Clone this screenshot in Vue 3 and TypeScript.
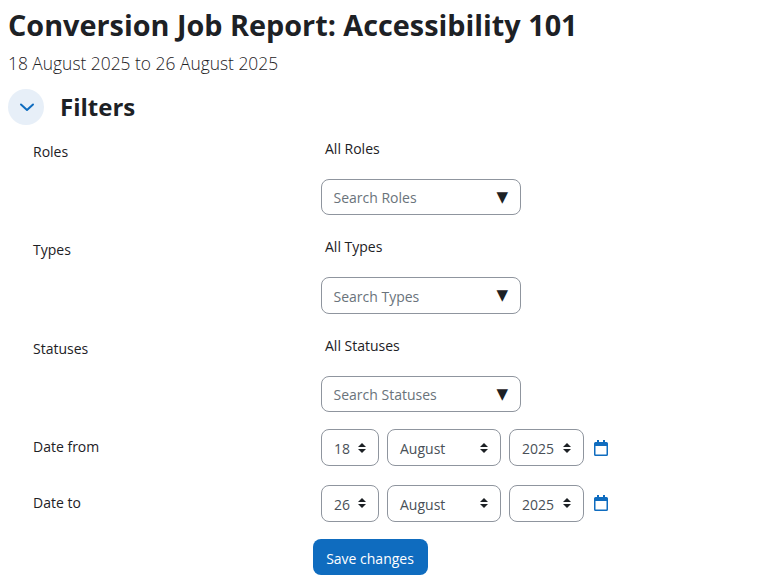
<script setup lang="ts">
interface AutoRow { label: string; value: string; placeholder: string }
interface DateRow { label: string; day: string }
const autos: AutoRow[] = [
  { label: 'Roles', value: 'All Roles', placeholder: 'Search Roles' },
  { label: 'Types', value: 'All Types', placeholder: 'Search Types' },
  { label: 'Statuses', value: 'All Statuses', placeholder: 'Search Statuses' },
]
const dates: DateRow[] = [
  { label: 'Date from', day: '18' },
  { label: 'Date to', day: '26' },
]
</script>

<template>
  <main class="page">
    <h1 class="title">Conversion Job Report: Accessibility 101</h1>
    <p class="range">18 August 2025 to 26 August 2025</p>
    <div class="filters-head">
      <span class="toggle">
        <svg width="16" height="16" viewBox="0 0 16 16" fill="none">
          <path d="M2 5.500 8 11l6-5.500" stroke="#0f6cbf" stroke-width="2" stroke-linecap="round" stroke-linejoin="round" />
        </svg>
      </span>
      <h2 class="filters-title">Filters</h2>
    </div>
    <form class="form" @submit.prevent>
      <div v-for="a in autos" :key="a.label" class="row auto-row">
        <span class="label">{{ a.label }}</span>
        <div class="auto">
          <span class="value">{{ a.value }}</span>
          <div class="search">
            <span class="placeholder">{{ a.placeholder }}</span>
            <span class="tri">▼</span>
          </div>
        </div>
      </div>
      <div v-for="d in dates" :key="d.label" class="row date-row">
        <span class="label">{{ d.label }}</span>
        <div class="dates">
          <span class="sel day"><span class="sel-text">{{ d.day }}</span><i class="updown"></i></span>
          <span class="sel month"><span class="sel-text">August</span><i class="updown"></i></span>
          <span class="sel year"><span class="sel-text">2025</span><i class="updown"></i></span>
          <svg class="cal" width="14" height="16" viewBox="0 0 14 16">
            <path fill="#0f6cbf" d="M3 0h2v2h4V0h2v2h1.500A1.500 1.500 0 0 1 14 3.500v11a1.500 1.500 0 0 1-1.500 1.500h-11A1.500 1.500 0 0 1 0 14.500v-11A1.500 1.500 0 0 1 1.500 2H3V0Zm-1.500 6v8.500h11V6h-11Z" />
          </svg>
        </div>
      </div>
      <div class="row submit-row">
        <button type="button" class="save">Save changes</button>
      </div>
    </form>
  </main>
</template>

<style scoped>
.page {
  width: 766px;
  height: 588px;
  box-sizing: border-box;
  overflow: hidden;
  padding: 7px 0 0 8px;
  font-family: "Open Sans", "Noto Sans", sans-serif;
  color: #1d2125;
  background: #fff;
}
.title {
  margin: 0;
  font-size: 28.800px;
  line-height: 36px;
  font-weight: 700;
}
.range {
  margin: 8px 0 0;
  font-size: 17.400px;
  line-height: 24px;
  font-weight: 300;
}
.filters-head {
  display: flex;
  align-items: center;
  gap: 16px;
  margin-top: 14px;
  margin-bottom: 7.750px;
}
.toggle {
  width: 36px;
  height: 36px;
  border-radius: 50%;
  background: #e7eff8;
  display: flex;
  align-items: center;
  justify-content: center;
  padding-left: 1px;
  box-sizing: border-box;
}
.filters-title {
  margin: 0;
  font-size: 24px;
  line-height: 36px;
  font-weight: 700;
}
.form {
  padding-left: 25px;
  font-size: 14px;
  line-height: 21px;
}
.row {
  display: grid;
  grid-template-columns: 280px 1fr;
}
.label {
  display: block;
}
.auto-row {
  height: 98.500px;
  padding-top: 8px;
  box-sizing: border-box;
}
.auto {
  display: flex;
  flex-direction: column;
  align-items: flex-start;
  padding-left: 8px;
  margin-top: -3px;
}
.value {
  padding-left: 4px;
  height: 21px;
}
.search {
  margin-top: 20px;
  width: 200px;
  height: 36.500px;
  box-sizing: border-box;
  border: 1px solid #8f959e;
  border-radius: 8px;
  padding: 0 12px 0 11.500px;
  display: flex;
  align-items: center;
  justify-content: space-between;
  color: #6a737b;
}
.placeholder {
  padding-top: 1px;
}
.tri {
  color: #1d2125;
  font-family: "DejaVu Sans", sans-serif;
  font-size: 15px;
}
.date-row {
  height: 55.750px;
  padding-top: 1px;
  box-sizing: border-box;
}
.date-row .label {
  padding-top: 7px;
}
.dates {
  display: flex;
  align-items: center;
  align-self: start;
  padding-left: 8px;
  gap: 8px;
}
.sel {
  position: relative;
  height: 36.500px;
  box-sizing: border-box;
  border: 1px solid #8f959e;
  border-radius: 8px;
  display: flex;
  align-items: center;
  padding-left: 12px;
  color: #495057;
}
.sel-text {
  padding-top: 2px;
}
.day { width: 58px; }
.month { width: 114px; }
.year { width: 75px; }
.updown {
  position: absolute;
  right: 12px;
  top: 50%;
  margin-top: -5px;
  width: 8px;
  height: 10px;
}
.updown::before,
.updown::after {
  content: "";
  position: absolute;
  left: 0;
  border-left: 4px solid transparent;
  border-right: 4px solid transparent;
}
.updown::before { top: 0; border-bottom: 4px solid #1d2125; }
.updown::after { bottom: 0; border-top: 4px solid #1d2125; }
.cal {
  margin-left: 2px;
}
.submit-row {
  margin-top: -1px;
}
.save {
  grid-column: 2;
  width: 115px;
  height: 36.500px;
  border: 0;
  border-radius: 8px;
  background: #0f6cbf;
  color: #fff;
  font: inherit;
  padding: 2px 1px 0 0;
}
</style>
